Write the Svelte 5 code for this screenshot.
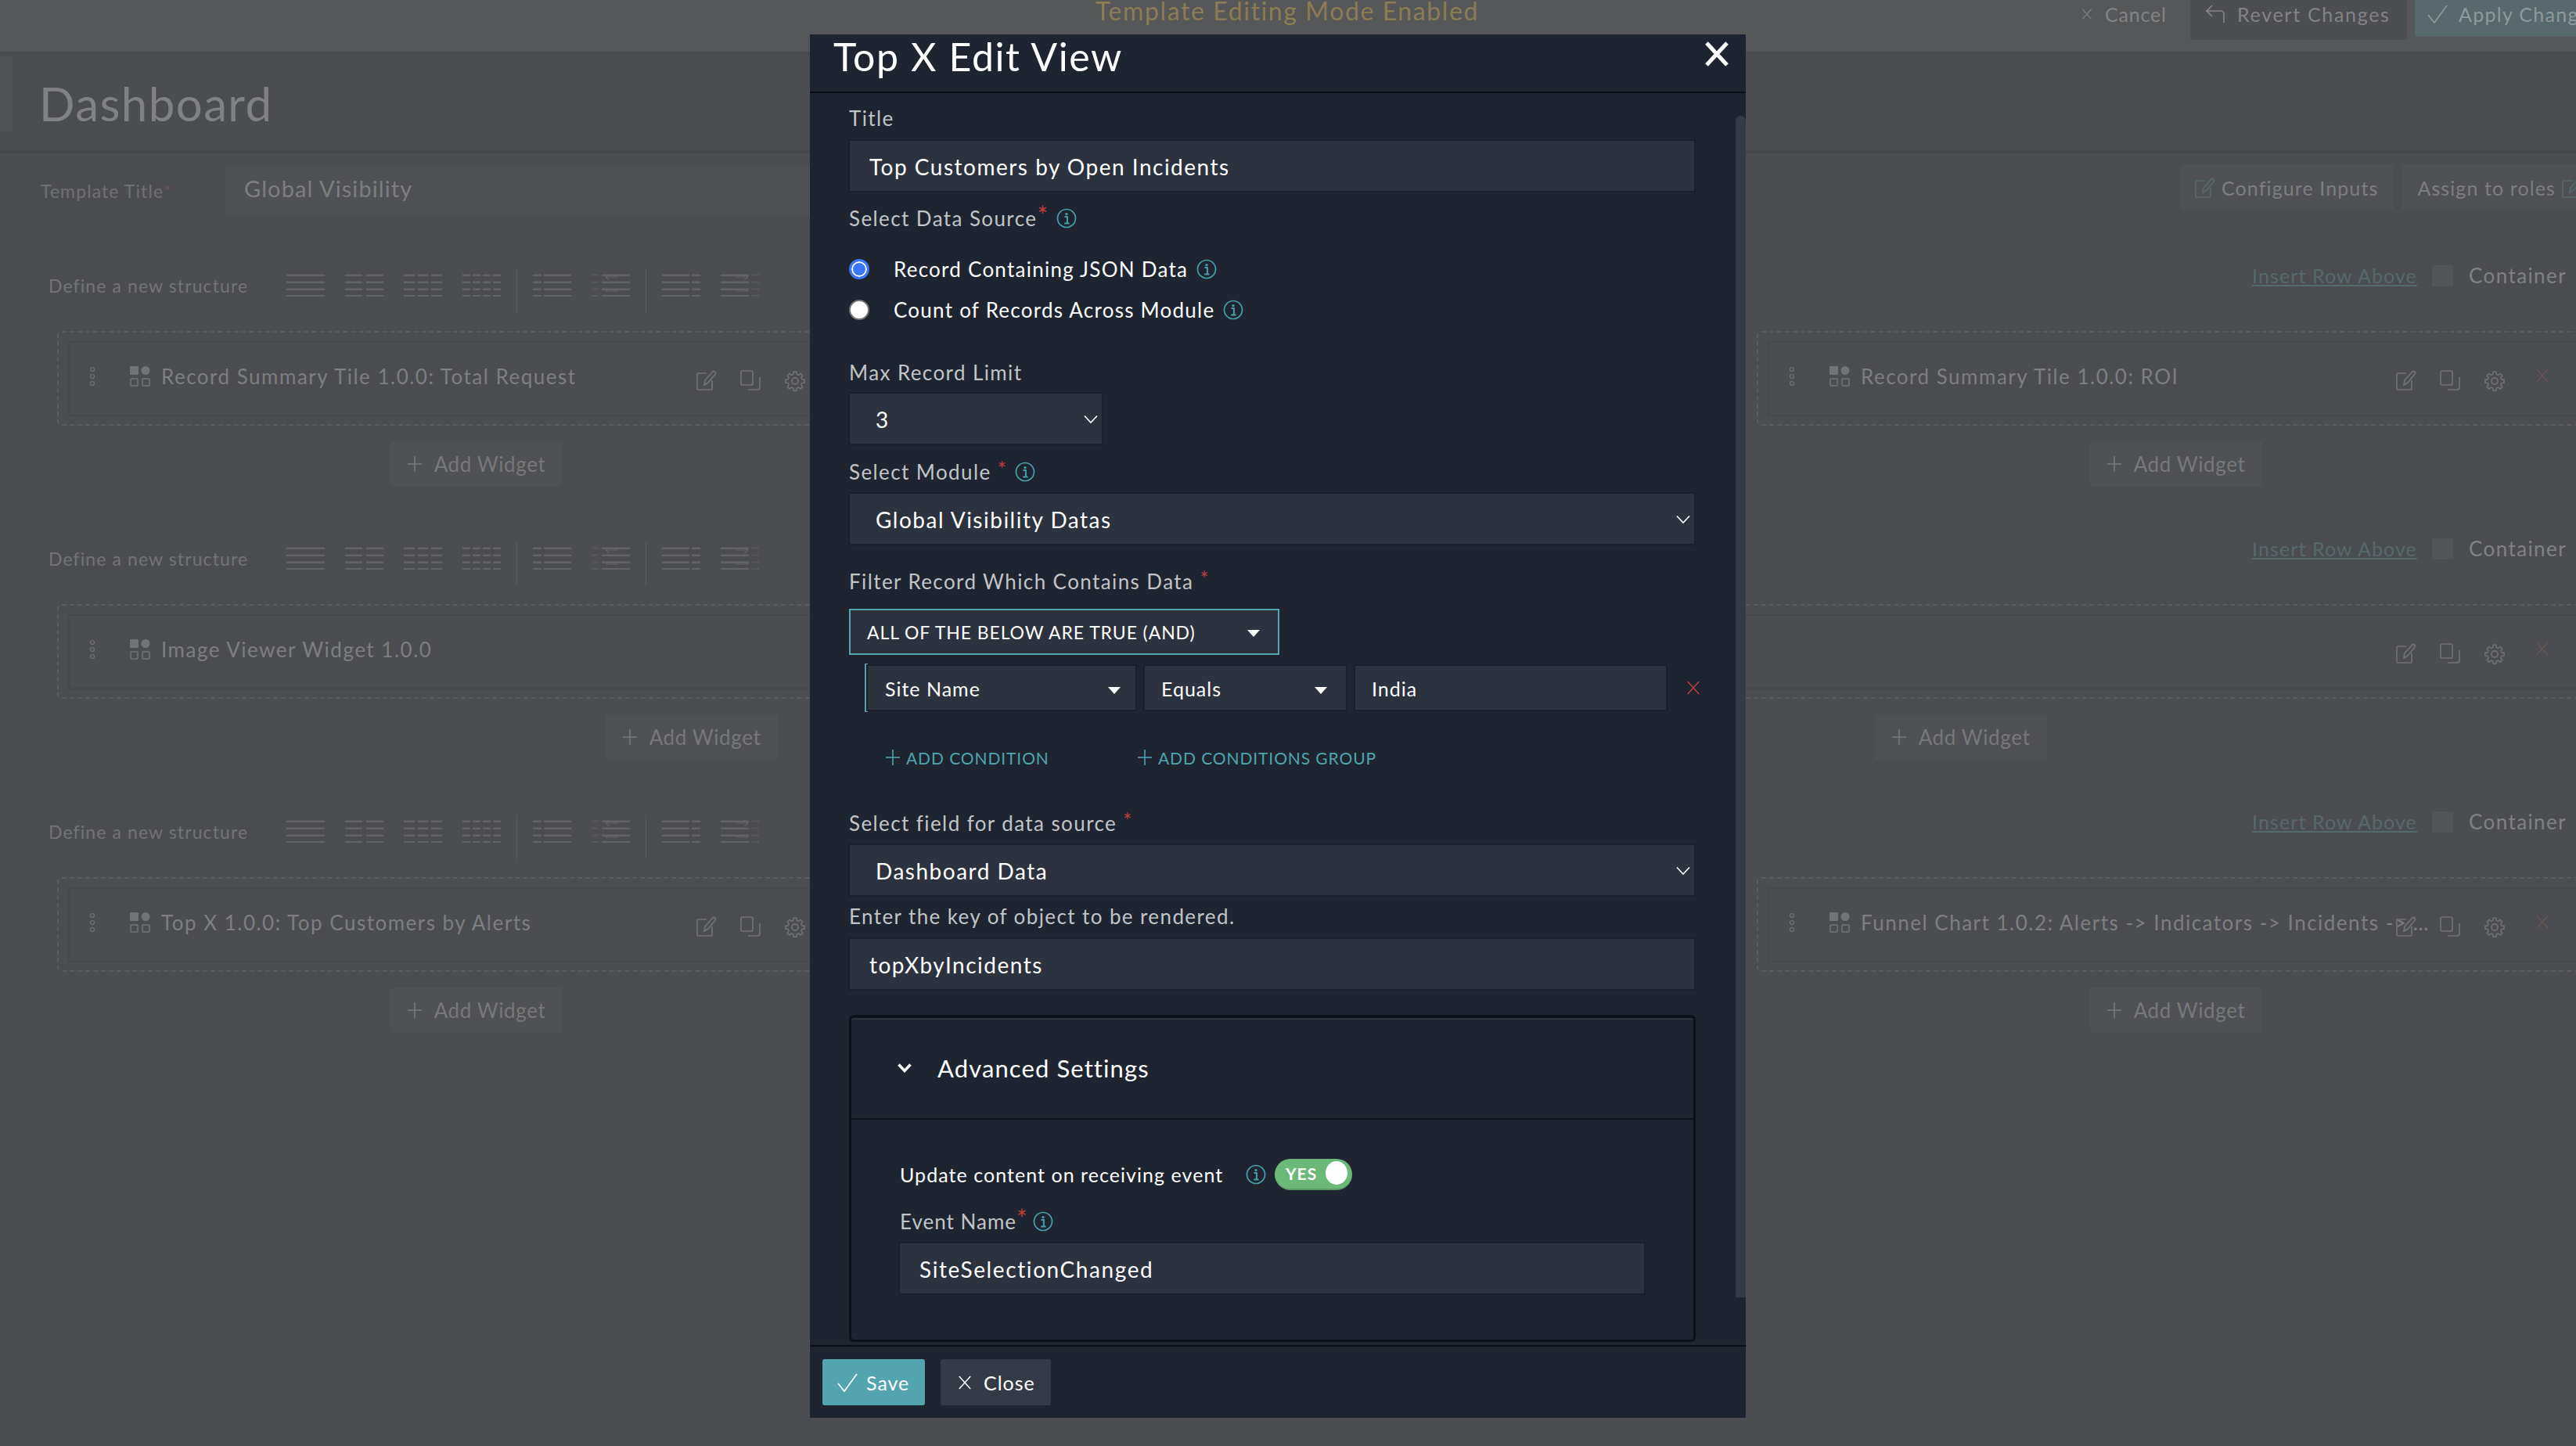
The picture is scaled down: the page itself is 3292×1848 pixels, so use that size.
<script>
  // structure picker icons: each line is a list of segment widths
  const structures = [
    [49], [22, 22], [14, 14, 14], [10, 10, 10, 10]
  ];

  const rows = [
    { cols: 3, widgets: ['Record Summary Tile 1.0.0: Total Request', '', 'Record Summary Tile 1.0.0: ROI'] },
    { cols: 2, widgets: ['Image Viewer Widget 1.0.0', ''] },
    { cols: 3, widgets: ['Top X 1.0.0: Top Customers by Alerts', '', 'Funnel Chart 1.0.2: Alerts -> Indicators -> Incidents -> Tasks'] }
  ];
</script>

{#snippet info()}
  <svg class="info" viewBox="0 0 26 26">
    <circle cx="13" cy="13" r="11.5" fill="none" stroke="#46a0ac" stroke-width="1.7" />
    <circle cx="13" cy="7.6" r="1.7" fill="#46a0ac" />
    <path d="M10.5 11h3.400v8M10.2 19.4h6.400" fill="none" stroke="#46a0ac" stroke-width="2" />
  </svg>
{/snippet}

{#snippet chevron()}
  <svg class="chevron" viewBox="0 0 18 12">
    <path d="M1 1.500l8 8.500 8-8.500" fill="none" stroke="#fff" stroke-width="1.600" />
  </svg>
{/snippet}

{#snippet caret()}
  <svg class="caret" viewBox="0 0 18 10"><path d="M0 0h18L9 10z" fill="#fff" /></svg>
{/snippet}

{#snippet plus()}
  <svg class="plus" viewBox="0 0 18 22"><path d="M9 1v20M0 11h18" stroke="currentColor" stroke-width="1.600" /></svg>
{/snippet}

{#snippet cross(size)}
  <svg width={size} height={size} viewBox="0 0 20 20"><path d="M2 1l16 18M18 1L2 19" fill="none" stroke="currentColor" stroke-width="1.600" /></svg>
{/snippet}

{#snippet check()}
  <svg width="26" height="24" viewBox="0 0 26 24"><path d="M1 13l8 10L25 1" fill="none" stroke="currentColor" stroke-width="1.700" /></svg>
{/snippet}

{#snippet editIcon()}
  <svg width="26" height="26" viewBox="0 0 26 26" fill="none" stroke="currentColor" stroke-width="1.700">
    <path d="M13 4H2.500a1.500 1.500 0 0 0-1.500 1.500v18A1.500 1.500 0 0 0 2.500 25h16a1.500 1.500 0 0 0 1.500-1.500V13" />
    <path d="M10 19l1-6L20.500 2.500a2 2 0 0 1 3.500 2.500L15 16z" />
  </svg>
{/snippet}

{#snippet structure(segs, mode)}
  <svg class="struct" viewBox="0 0 49 30">
    {#each [1.5, 10.5, 19.5, 28] as y}
      {#if mode === 'left'}
        <rect x="0" {y} width="9" height="2" class="dim" />
        <rect x="13" {y} width="36" height="2.500" />
      {:else if mode === 'right'}
        <rect x="0" {y} width="36" height="2.500" />
        <rect x="40" {y} width="9" height="2" class="dim" />
      {:else if mode === 'narrow'}
        <rect x="0" {y} width="35" height="2.500" />
        <rect x="38" {y} width="11" height="2.500" />
      {:else if mode === 'wide'}
        <rect x="0" {y} width="11" height="2.500" />
        <rect x="14" {y} width="35" height="2.500" />
      {:else}
        {#each segs as w, j}
          <rect x={j * ((49 - w) / Math.max(segs.length - 1, 1))} {y} width={w} height="2.500" />
        {/each}
      {/if}
    {/each}
    {#if mode === 'left'}
      <path d="M14 6h16M14 6l5-4M14 6l5 4M14 24h16M14 24l5-4" fill="none" stroke="currentColor" stroke-width="1.200" transform="translate(4 -1)" />
    {/if}
    {#if mode === 'right'}
      <path d="M18 6h16M34 6l-5-4M34 6l-5 4M18 24h16M34 24l-5-4" fill="none" stroke="currentColor" stroke-width="1.200" transform="translate(1 -1)" />
    {/if}
  </svg>
{/snippet}

<div class="screen">
  <div class="topbar">
    <div class="mode-title">Template Editing Mode Enabled</div>
    <div class="top-actions">
      <span class="top-cancel">{@render cross(14)} Cancel</span>
      <span class="top-btn revert">
        <svg width="26" height="24" viewBox="0 0 26 24" fill="none" stroke="currentColor" stroke-width="1.700"><path d="M8 1L1 8l7 7M1 8h18a4 4 0 0 1 4 4v11" /></svg>
        Revert Changes
      </span>
      <span class="top-btn apply">{@render check()} Apply Changes</span>
    </div>
  </div>

  <div class="page-head">
    <div class="stub"></div>
    <h1>Dashboard</h1>
  </div>

  <div class="content">
    <div class="template-row">
      <span class="tpl-label">Template Title<i>*</i></span>
      <div class="tpl-input">Global Visibility</div>
      <div class="tpl-btns">
        <span class="tpl-btn"><span class="teal-dim">{@render editIcon()}</span> Configure Inputs</span>
        <span class="tpl-btn">Assign to roles <span class="teal-dim">{@render editIcon()}</span></span>
      </div>
    </div>

    {#each rows as row}
      <section class="row">
        <div class="row-head">
          <span class="define">Define a new structure</span>
          <div class="picker">
            {#each structures as segs}{@render structure(segs, '')}{/each}
            <span class="sep"></span>
            {@render structure([], 'wide')}
            {@render structure([], 'left')}
            <span class="sep"></span>
            {@render structure([], 'narrow')}
            {@render structure([], 'right')}
          </div>
          <div class="row-right">
            <span class="insert">Insert Row Above</span>
            <span class="box"></span>
            <span class="container-label">Container</span>
          </div>
        </div>
        <div class="cols" class:two={row.cols === 2}>
          {#each row.widgets as title}
            <div class="col">
              <div class="dashed">
                <div class="widget">
                  <svg class="dots" width="8" height="26" viewBox="0 0 8 26" fill="none" stroke="currentColor" stroke-width="1.200">
                    <circle cx="4" cy="4" r="2.500" /><circle cx="4" cy="13" r="2.500" /><circle cx="4" cy="22" r="2.500" />
                  </svg>
                  <svg class="grid-icon" width="26" height="26" viewBox="0 0 26 26" fill="none" stroke="currentColor" stroke-width="1.500">
                    <rect x="0" y="0" width="11" height="11" rx="1" fill="currentColor" stroke="none" />
                    <circle cx="20" cy="5.500" r="5.500" fill="currentColor" stroke="none" />
                    <rect x="1" y="16" width="9" height="9" rx="1" />
                    <rect x="16" y="16" width="9" height="9" rx="1" />
                  </svg>
                  <span class="widget-title">{title}</span>
                  <div class="widget-actions">
                    {@render editIcon()}
                    <svg width="26" height="26" viewBox="0 0 26 26" fill="none" stroke="currentColor" stroke-width="1.700">
                      <rect x="1" y="1" width="15" height="18" rx="2" /><path d="M10 25h12a3 3 0 0 0 3-3V9" />
                    </svg>
                    <svg width="28" height="28" viewBox="0 0 24 24" fill="none" stroke="currentColor" stroke-width="1.400">
                      <circle cx="12" cy="12" r="3.500" />
                      <path d="M10.300 2h3.400l.5 3 2 .9 2.500-1.800 2.400 2.400-1.800 2.500.9 2 3 .5v3.400l-3 .5-.9 2 1.800 2.500-2.400 2.400-2.500-1.800-2 .9-.5 3h-3.400l-.5-3-2-.9-2.500 1.800-2.400-2.400 1.800-2.500-.9-2-3-.5v-3.400l3-.5.9-2-1.800-2.500 2.400-2.400 2.500 1.800 2-.9z" transform="translate(12 12) scale(.92) translate(-12 -13)" />
                    </svg>
                    <span class="widget-x">{@render cross(18)}</span>
                  </div>
                </div>
              </div>
              <div class="add-wrap"><span class="add-widget">{@render plus()} Add Widget</span></div>
            </div>
          {/each}
        </div>
      </section>
    {/each}
  </div>

  <div class="modal">
    <header class="modal-head">
      <h2>Top X Edit View</h2>
      <svg class="modal-close" width="32" height="32" viewBox="0 0 32 32"><path d="M3 2l26 28M29 2L3 30" stroke="#fff" stroke-width="5" /></svg>
    </header>

    <div class="modal-body">
      <div class="scrollbar"></div>

      <div class="label first">Title</div>
      <div class="field">Top Customers by Open Incidents</div>

      <div class="label source">Select Data Source<sup>*</sup> {@render info()}</div>
      <div class="radios">
        <div class="radio-row">
          <span class="radio on"></span>
          <span>Record Containing JSON Data</span>
          {@render info()}
        </div>
        <div class="radio-row">
          <span class="radio"></span>
          <span>Count of Records Across Module</span>
          {@render info()}
        </div>
      </div>

      <div class="label limit">Max Record Limit</div>
      <div class="field select small"><span>3</span>{@render chevron()}</div>

      <div class="label module">Select Module <b>*</b> {@render info()}</div>
      <div class="field select"><span>Global Visibility Datas</span>{@render chevron()}</div>

      <div class="label filter">Filter Record Which Contains Data <b>*</b></div>
      <div class="logic"><span>ALL OF THE BELOW ARE TRUE (AND)</span>{@render caret()}</div>

      <div class="condition">
        <div class="cond-field site"><span>Site Name</span>{@render caret()}</div>
        <div class="cond-field equals"><span>Equals</span>{@render caret()}</div>
        <div class="cond-field india"><span>India</span></div>
        <span class="cond-x">{@render cross(18)}</span>
      </div>

      <div class="cond-links">
        <span class="link first-link">{@render plus()} ADD CONDITION</span>
        <span class="link">{@render plus()} ADD CONDITIONS GROUP</span>
      </div>

      <div class="label datafield">Select field for data source <b>*</b></div>
      <div class="field select"><span>Dashboard Data</span>{@render chevron()}</div>

      <div class="label keyname">Enter the key of object to be rendered.</div>
      <div class="field">topXbyIncidents</div>

      <div class="advanced">
        <div class="adv-head">
          <svg width="18" height="12" viewBox="0 0 18 12"><path d="M1.500 1.500L9 9.500l7.500-8" fill="none" stroke="#fff" stroke-width="3.500" /></svg>
          <span>Advanced Settings</span>
        </div>
        <div class="adv-body">
          <div class="toggle-row">
            <span class="toggle-label">Update content on receiving event</span>
            {@render info()}
            <span class="toggle"><span>YES</span><i></i></span>
          </div>
          <div class="label event">Event Name<sup>*</sup> {@render info()}</div>
          <div class="field event-field">SiteSelectionChanged</div>
        </div>
      </div>
    </div>

    <footer class="modal-foot">
      <span class="foot-btn save">{@render check()} Save</span>
      <span class="foot-btn close">{@render cross(18)} Close</span>
    </footer>
  </div>
</div>

<style>
  :global(body) {
    margin: 0;
    background: #4c4d50;
  }

  .screen {
    position: relative;
    width: 3292px;
    height: 1848px;
    overflow: hidden;
    background: #4c4d50;
    color: #7d7e80;
    font-family: Lato, "Open Sans", sans-serif;
    font-size: 26px;
    letter-spacing: 1.1px;
  }

  /* top bar */
  .topbar {
    display: grid;
    grid-template-columns: 1400px 1256px auto;
    width: 3400px;
    height: 66px;
    background: #565759;
    border-bottom: 4px solid #4a4b4d;
  }

  .mode-title {
    grid-column: 1 / 3;
    padding-left: 1400px;
    margin-top: -4px;
    font-size: 32px;
    line-height: 36px;
    color: #8b7c54;
    letter-spacing: 1.6px;
    white-space: nowrap;
  }

  .top-actions {
    grid-column: 3;
    display: flex;
    align-items: flex-start;
    font-size: 25px;
    letter-spacing: 1.7px;
    color: #828385;
  }

  .top-cancel {
    display: flex;
    align-items: center;
    gap: 16px;
    width: 139px;
    height: 36px;
    padding-left: 4px;
    letter-spacing: 0.8px;
  }

  .top-btn {
    display: flex;
    align-items: center;
    gap: 14px;
    height: 51px;
    box-sizing: border-box;
    padding: 0 0 15px 20px;
    background: #4d4e51;
    border-radius: 0 0 4px 4px;
    margin-right: 10px;
  }

  .revert {
    width: 277px;
    white-space: nowrap;
  }

  .apply {
    height: 47px;
    padding: 0 16px 11px;
    background: #56696c;
    color: #8d9a9c;
    letter-spacing: 1.3px;
    white-space: nowrap;
  }

  /* page title */
  .page-head {
    display: flex;
    gap: 34px;
    height: 120px;
    padding-top: 2px;
    border-bottom: 4px solid #464749;
  }

  .stub {
    width: 16px;
    height: 96px;
    background: #525355;
  }

  h1 {
    margin: 25px 0 0;
    font-size: 60px;
    line-height: 70px;
    font-weight: 400;
    color: #808183;
    letter-spacing: 1.4px;
  }

  .content {
    margin-left: 22px;
    width: 3298px;
    border-left: 1px solid #4f5053;
  }

  .template-row {
    display: flex;
    align-items: center;
    height: 96px;
    padding-left: 29px;
    border-bottom: 1px solid #505154;
  }

  .tpl-label {
    width: 236px;
    flex: none;
    font-size: 23px;
    color: #6f7072;
  }

  .tpl-label i {
    color: #6c5756;
    font-style: normal;
  }

  .tpl-input {
    width: 1680px;
    height: 63px;
    padding-left: 24px;
    flex: none;
    line-height: 56px;
    background: #505154;
    font-size: 29px;
  }

  .tpl-btns {
    display: flex;
    gap: 10px;
    margin: -9px 0 0 793px;
  }

  .tpl-btn {
    display: flex;
    align-items: center;
    gap: 8px;
    height: 59px;
    padding: 0 20px;
    background: #505154;
    border-radius: 4px;
    font-size: 25px;
    white-space: nowrap;
  }

  .teal-dim {
    display: flex;
    color: #56696c;
  }

  /* dashboard rows */
  .row {
    height: 349px;
    padding-left: 50px;
    padding-top: 56px;
    box-sizing: border-box;
  }

  .row-head {
    display: flex;
    align-items: flex-start;
    height: 74px;
  }

  .define {
    width: 304px;
    flex: none;
    font-size: 23px;
    line-height: 32px;
    margin-left: -11px;
    color: #727375;
  }

  .picker {
    display: flex;
    align-items: flex-start;
    gap: 26px;
  }

  .struct {
    width: 49px;
    height: 30px;
    fill: #626365;
    color: #626365;
  }

  .struct .dim {
    fill: #58595b;
  }

  .sep {
    width: 1px;
    height: 56px;
    margin: -5px -6px 0;
    background: #5a5b5d;
  }

  .row-right {
    display: flex;
    align-items: center;
    margin: -11px 41px 0 auto;
    height: 28px;
  }

  .insert {
    color: #56696c;
    text-decoration: underline;
    font-size: 25px;
    width: 230px;
  }

  .box {
    width: 27px;
    height: 27px;
    background: #545557;
  }

  .container-label {
    margin-left: 20px;
    font-size: 26px;
    letter-spacing: 1.4px;
    color: #808183;
  }

  .cols {
    display: grid;
    grid-template-columns: repeat(3, 1072px);
    gap: 14px;
  }

  .cols.two {
    grid-template-columns: repeat(2, 1622px);
    gap: 0;
  }

  .dashed {
    height: 121px;
    padding: 12px;
    box-sizing: border-box;
    border: 2px dashed #5b5c5e;
    border-radius: 6px;
  }

  .widget {
    position: relative;
    display: flex;
    align-items: center;
    height: 96px;
    box-sizing: border-box;
    margin-top: -1px;
    border: 2px solid #47484a;
    border-width: 2px 0 2px 2px;
    padding: 0 0 6px 25px;
  }

  .dots {
    margin-right: 44px;
    color: #727375;
  }

  .grid-icon {
    margin-right: 14px;
    color: #727375;
    flex: none;
  }

  .widget-title {
    width: 726px;
    flex: none;
    overflow: hidden;
    white-space: nowrap;
    text-overflow: ellipsis;
    letter-spacing: 1.5px;
    color: #7d7e80;
  }

  /* action icons sit over the title, it runs underneath them */
  .widget-actions {
    position: absolute;
    top: 35px;
    right: 45px;
    display: flex;
    align-items: flex-start;
    gap: 30px;
    color: #717274;
  }

  .widget-x {
    display: flex;
    color: #6b5553;
    margin: -2px 0 0 8px;
  }

  .add-wrap {
    display: flex;
    justify-content: center;
    margin-top: 20px;
  }

  .add-widget {
    display: flex;
    align-items: center;
    gap: 16px;
    height: 58px;
    padding: 0 22px;
    background: #505154;
    border-radius: 3px;
    font-size: 26px;
    letter-spacing: 0.6px;
    color: #77787a;
  }

  .plus {
    width: 18px;
    height: 22px;
  }

  /* modal */
  .modal {
    position: absolute;
    top: 44px;
    left: 1035px;
    width: 1196px;
    height: 1768px;
    display: flex;
    flex-direction: column;
    background: #1e2430;
    color: #fff;
    letter-spacing: 1.4px;
  }

  .modal-head {
    display: flex;
    align-items: flex-start;
    justify-content: space-between;
    height: 73px;
    flex: none;
    padding: 0 21px 0 30px;
    border-bottom: 2px solid #0c0f14;
  }

  h2 {
    margin: -2px 0 0;
    font-size: 50px;
    line-height: 60px;
    font-weight: 400;
    letter-spacing: 1.6px;
  }

  .modal-close {
    margin-top: 9px;
  }

  .modal-body {
    position: relative;
    flex: 1;
    overflow: hidden;
    padding-left: 50px;
  }

  .scrollbar {
    position: absolute;
    top: 29px;
    right: 0;
    width: 13px;
    height: 1510px;
    background: #343a47;
    border-radius: 7px 7px 0 0;
  }

  .label {
    display: flex;
    align-items: center;
    height: 30px;
    box-sizing: border-box;
    padding-top: 1px;
    color: #c2c4c6;
    font-size: 26px;
    white-space: pre;
  }

  .label sup,
  .label b {
    color: #c03e3e;
    font-weight: 400;
    line-height: 0;
  }

  .label sup {
    font-size: 32px;
    margin-top: -8px;
  }

  .label b {
    font-size: 26px;
    margin-top: -6px;
  }

  .label .info,
  .toggle-row .info {
    margin-left: 10px;
  }

  .info {
    width: 26px;
    height: 26px;
    flex: none;
  }

  .label.first {
    margin-top: 16px;
  }

  .field {
    width: 1079px;
    height: 64px;
    display: flex;
    align-items: center;
    box-sizing: border-box;
    padding: 2px 25px 0;
    margin: 0 0 0 1px;
    background: #2c323e;
    outline: 2px solid #1a1f29;
    font-size: 28px;
    letter-spacing: 1.5px;
  }

  .label.first + .field {
    margin-top: 15px;
  }

  .label.source {
    margin-top: 19px;
  }

  .radios {
    margin-top: 25px;
  }

  .radio-row {
    display: flex;
    align-items: center;
    height: 52px;
    font-size: 26px;
    letter-spacing: 1.25px;
  }

  .radio-row .info {
    margin-left: 11px;
  }

  .radio {
    width: 26px;
    height: 26px;
    margin-right: 31px;
    box-sizing: border-box;
    border-radius: 50%;
    background: #fff;
    border: 2px solid #777;
  }

  .radio.on {
    background: #3b76f6;
    border: 3px solid #3b76f6;
    box-shadow: inset 0 0 0 2px #fff;
  }

  .label.limit {
    margin-top: 38px;
  }

  .select {
    justify-content: space-between;
    padding: 2px 5px 0 33px;
  }

  .small {
    width: 322px;
  }

  .label.limit + .field {
    margin-top: 13px;
  }

  .label.module {
    margin-top: 20px;
  }

  .label.module + .field {
    margin-top: 14px;
  }

  .chevron {
    width: 18px;
    height: 12px;
  }

  .label.filter {
    margin-top: 32px;
  }

  .logic {
    display: flex;
    align-items: center;
    justify-content: space-between;
    width: 550px;
    height: 59px;
    box-sizing: border-box;
    margin-top: 21px;
    padding: 0 23px 0 21px;
    background: #2c323e;
    border: 2px solid #4fa5b0;
    font-size: 23px;
    letter-spacing: 0.9px;
    white-space: nowrap;
  }

  .caret {
    width: 16px;
    height: 9px;
    margin-top: 4px;
  }

  .condition {
    display: flex;
    align-items: center;
    gap: 12px;
    height: 62px;
    margin: 11px 0 0 20px;
    border-left: 4px solid #4fa5b0;
  }

  .cond-field {
    display: flex;
    align-items: center;
    justify-content: space-between;
    height: 56px;
    box-sizing: border-box;
    background: #2c323e;
    outline: 2px solid #1a1f29;
    font-size: 25px;
    letter-spacing: 1px;
  }

  .site {
    width: 342px;
    padding: 2px 19px 0 22px;
  }

  .equals {
    width: 257px;
    padding: 2px 24px 0 21px;
  }

  .india {
    width: 397px;
    padding: 2px 0 0 21px;
  }

  .cond-x {
    display: flex;
    margin-left: 14px;
    color: #c03e3e;
  }

  .cond-links {
    display: flex;
    margin: 46px 0 0 47px;
    height: 24px;
  }

  .link {
    display: flex;
    align-items: center;
    gap: 8px;
    color: #4fa5b0;
    font-size: 21px;
    letter-spacing: 0.9px;
    white-space: nowrap;
  }

  .first-link {
    width: 322px;
  }

  .label.datafield {
    margin-top: 56px;
  }

  .label.datafield + .field {
    margin-top: 14px;
  }

  .label.keyname {
    margin-top: 11px;
  }

  .label.keyname + .field {
    margin-top: 15px;
  }

  .advanced {
    width: 1082px;
    height: 418px;
    box-sizing: border-box;
    margin-top: 33px;
    border: 3px solid #0e1218;
    border-top-width: 4px;
    border-radius: 6px;
    box-shadow: inset 0 2px 0 #2c323e;
  }

  .adv-head {
    display: flex;
    align-items: center;
    gap: 33px;
    height: 128px;
    padding-left: 59px;
    border-bottom: 2px solid #0e1218;
    font-size: 31px;
    letter-spacing: 1.1px;
  }

  .adv-body {
    padding-left: 62px;
  }

  .toggle-row {
    display: flex;
    align-items: center;
    height: 40px;
    margin-top: 50px;
  }

  .toggle-label {
    width: 442px;
    font-size: 25px;
    letter-spacing: 1.05px;
    flex: none;
    margin-right: -10px;
  }

  .toggle {
    display: flex;
    align-items: center;
    justify-content: space-between;
    width: 99px;
    height: 40px;
    margin-left: 11px;
    padding: 0 6px 2px 14px;
    box-sizing: border-box;
    background: #6cb878;
    border-bottom: 2px solid #5a9e66;
    border-radius: 20px;
    font-size: 21px;
    font-weight: 700;
    letter-spacing: 1px;
  }

  .toggle i {
    width: 28px;
    height: 30px;
    background: #fff;
    border-radius: 50%;
  }

  .label.event {
    margin-top: 24px;
    letter-spacing: 1px;
  }

  .label.event .info {
    margin-left: 6px;
  }

  .event-field {
    width: 951px;
    margin: 14px 0 0 0;
    letter-spacing: 1.6px;
  }

  .modal-foot {
    display: flex;
    gap: 20px;
    height: 93px;
    flex: none;
    padding: 16px 0 0 16px;
    box-sizing: border-box;
    border-top: 2px solid #0c0f14;
  }

  .foot-btn {
    display: flex;
    align-items: center;
    height: 59px;
    box-sizing: border-box;
    border-radius: 3px;
    font-size: 25px;
    letter-spacing: 1px;
    gap: 11px;
  }

  .save {
    width: 131px;
    padding-left: 19px;
    background: #52a4ae;
  }

  .close {
    width: 141px;
    padding-left: 22px;
    gap: 15px;
    background: #343a46;
  }
</style>
